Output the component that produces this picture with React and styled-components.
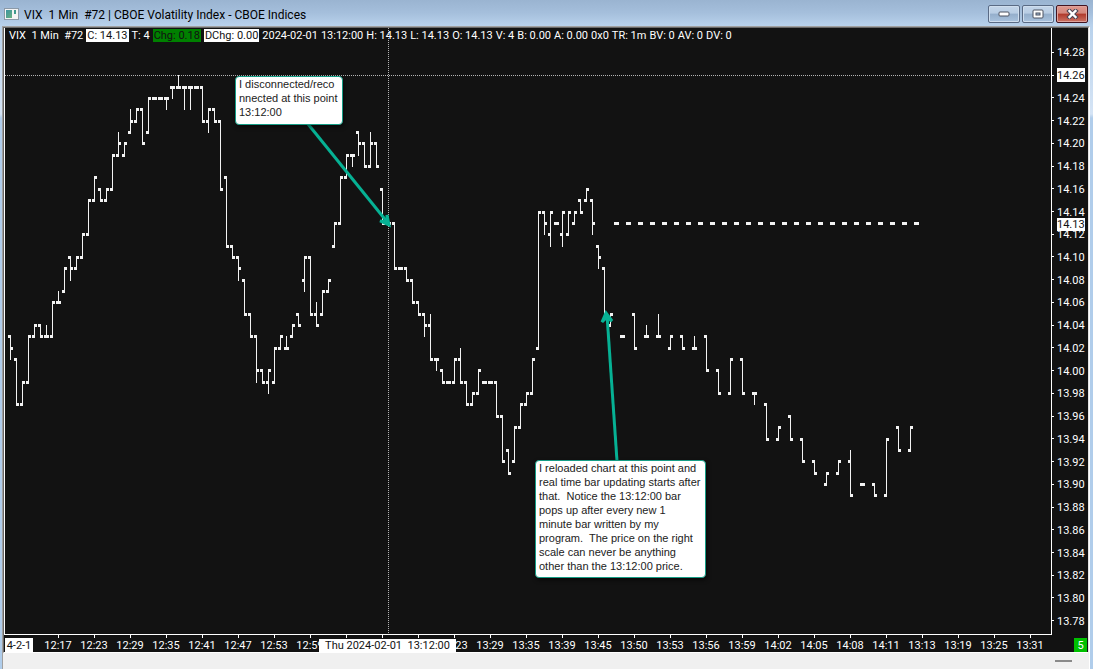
import React from 'react';
import styled, { createGlobalStyle } from 'styled-components';

// one entry per bar: [open, high, low, close] in cents, or a single number for a flat bar
const history = [
  [1403,1403,1401,1402],[1401,1401,1397,1397],[1397,1399,1397,1399],[1399,1403,1399,1403],
  [1403,1404,1403,1404],[1404,1404,1403,1403],[1403,1404,1403,1403],[1403,1406,1403,1406],
  [1406,1407,1406,1406],[1407,1409,1407,1409],[1410,1410,1408,1409],[1409,1410,1409,1410],
  [1410,1412,1410,1412],[1412,1415,1412,1415],[1415,1417,1415,1417],[1416,1416,1415,1415],
  [1415,1416,1415,1416],[1416,1419,1416,1419],[1419,1421,1419,1420],[1419,1420,1419,1420],
  [1421,1423,1421,1422],[1422,1423,1422,1423],[1423,1423,1420,1420],[1421,1424,1421,1424],
  1424,1424,[1424,1424,1423,1424],[1425,1425,1424,1425],
  [1425,1426,1425,1425],[1425,1425,1423,1425],[1425,1425,1423,1425],1425,
  [1425,1425,1422,1422],[1422,1423,1421,1423],[1423,1423,1422,1422],[1422,1422,1416,1416],
  [1417,1417,1411,1411],[1411,1411,1410,1410],[1410,1410,1408,1409],[1408,1408,1405,1405],
  [1405,1405,1403,1403],[1403,1403,1399,1400],[1400,1400,1399,1399],[1399,1400,1398,1400],
  [1399,1402,1399,1402],[1402,1403,1402,1403],[1402,1403,1402,1402],[1403,1404,1403,1404],
  [1405,1405,1404,1404],[1408,1410,1407,1410],[1410,1410,1405,1405],[1405,1406,1404,1404],
  [1405,1407,1405,1407],[1407,1408,1407,1408],[1411,1413,1411,1413],[1413,1417,1413,1417],
  [1417,1419,1417,1419],[1419,1419,1418,1419],[1421,1421,1419,1420],[1420,1420,1418,1418],
  [1418,1421,1418,1420],[1420,1420,1418,1418],[1416,1416,1413,1413],1413,
  [1413,1413,1409,1409],1409,[1409,1409,1408,1408],[1408,1408,1406,1406],
  [1406,1406,1405,1405],[1405,1405,1403,1404],[1404,1405,1401,1401],[1401,1401,1400,1401],
  [1400,1400,1399,1399],1399,[1399,1401,1399,1401],[1401,1402,1399,1399],
  [1399,1399,1397,1397],[1397,1398,1397,1398],[1398,1400,1398,1400],1399,
  1399,[1399,1399,1396,1396],[1396,1396,1392,1392],[1393,1393,1391,1391],
  [1392,1395,1392,1395],[1395,1397,1395,1397],[1397,1398,1397,1398],[1398,1401,1398,1401],
  [1402,1414,1402,1414],[1414,1414,1412,1413],[1412,1414,1411,1414],1413,
  [1412,1414,1411,1414],[1412,1414,1412,1414],[1413,1414,1413,1414],[1415,1415,1414,1414],
  [1415,1416,1415,1416],[1415,1415,1412,1413],[1411,1411,1409,1410],[1409,1409,1405,1405],
  [1404,1405,1404,1405],
];

// real time bars, the 13:12:00 bar is written again in front of each
const live = [
  1403,[1405,1405,1402,1402],[1403,1404,1403,1403],[1403,1405,1403,1403],
  [1402,1403,1402,1403],[1403,1403,1402,1402],[1402,1403,1402,1402],[1403,1403,1400,1400],
  [1400,1400,1398,1398],[1398,1401,1398,1401],[1401,1401,1398,1398],[1398,1398,1397,1398],
  [1397,1397,1394,1394],[1394,1395,1394,1395],[1396,1396,1394,1394],[1394,1394,1392,1392],
  [1392,1392,1391,1391],[1390,1391,1390,1391],[1391,1392,1391,1392],[1392,1393,1389,1389],
  1390,[1390,1390,1389,1389],[1389,1394,1389,1394],[1395,1395,1393,1393],
  [1393,1395,1393,1395],
];

const bars = [...history, ...live.flatMap((b) => [1413, b]), 1413].map((b) =>
  Array.isArray(b) ? b : [b, b, b, b]
);

// the three blank ones sit behind the cursor time
const times = [
  '12:17','12:23','12:29','12:35','12:41','12:47','12:53','12:59','','',
  '','13:23','13:29','13:35','13:39','13:45','13:50','13:53','13:56','13:59',
  '14:02','14:05','14:08','14:11','13:13','13:19','13:25','13:31',
];

const quote = [
  '2024-02-01','13:12:00','H: 14.13','L: 14.13','O: 14.13','V: 4','B: 0.00','A: 0.00',
  '0x0','TR: 1m','BV: 0','AV: 0','DV: 0',
];

const prices = Array.from({ length: 26 }, (_, i) => ((1428 - i * 2) / 100).toFixed(2));

const priceY = (p) => Math.round(24.6 + (1428 - p) * 11.35);

const Bar = ({ x, bar }) => {
  const [open, high, low, close] = bar;
  return (
    <g>
      <rect x={x} y={priceY(high)} width="1" height={priceY(low) - priceY(high) + 1} />
      <rect x={x - 2} y={priceY(open) - 1} width="3" height="3" />
      <rect x={x} y={priceY(close) - 1} width="3" height="3" />
    </g>
  );
};

const App = () => {
  return (
    <Window>
      <GlobalStyle />
      <TitleBar>
        <AppIcon />
        <Title>{'VIX  1 Min  #72 | CBOE Volatility Index - CBOE Indices'}</Title>
        <WindowButton aria-label="Minimize">
          <svg width="13" height="7">
            <rect x="1" y="1" width="10" height="4" rx="1" fill="#fff" stroke="#4c5261" />
          </svg>
        </WindowButton>
        <WindowButton aria-label="Maximize">
          <svg width="12" height="10">
            <rect x="1" y="1" width="10" height="8" rx="1" fill="#fff" stroke="#4c5261" />
            <rect x="4" y="4" width="4" height="2" fill="#9fb8d3" stroke="#4c5261" />
          </svg>
        </WindowButton>
        <WindowButton aria-label="Close" $close>
          <svg width="13" height="10">
            <path d="M3.5 2l6 6M9.5 2l-6 6" stroke="#4a4655" strokeWidth="4.4" strokeLinecap="square" />
            <path d="M3.5 2l6 6M9.5 2l-6 6" stroke="#fff" strokeWidth="2.4" strokeLinecap="square" />
          </svg>
        </WindowButton>
      </TitleBar>

      <Frame>
        <Chart>
          <Plot>
            <Canvas aria-label="VIX one minute bars">
              <g shapeRendering="crispEdges">
                <path d="M0 47.5H1047" stroke="#b4b4b4" strokeDasharray="1 1" />
                <path d="M383.5 0V606" stroke="#b4b4b4" strokeDasharray="1 1" />
                <g fill="#f2f2f2">
                  {bars.map((bar, i) => (
                    <Bar key={i} x={5 + i * 6} bar={bar} />
                  ))}
                </g>
              </g>
              <g fill="none" stroke="#06b194" strokeWidth="3">
                <path d="M303 96L383 195" />
                <path d="M375 193L384 197L382 187L382 194Z" />
                <path d="M612 433L602 287" />
                <path d="M597 294L601 285L607 293L601 290Z" />
              </g>
            </Canvas>
            <Info>
              <span>{'VIX  1 Min  #72'}</span>
              <Mark $bg="#fff">C: 14.13</Mark>
              <span>T: 4</span>
              <Mark $bg="#008000">Chg: 0.18</Mark>
              <Mark $bg="#fff">DChg: 0.00</Mark>
              {quote.map((q) => (
                <span key={q}>{q}</span>
              ))}
            </Info>
            <Note $x={230} $y={48} $width={108} $height={49}>
              I disconnected/reco<br />nnected at this point<br />13:12:00
            </Note>
            <Note $x={530} $y={432} $width={171} $height={118}>
              I reloaded chart at this point and<br />
              real time bar updating starts after<br />
              {'that.  Notice the 13:12:00 bar'}<br />
              pops up after every new 1<br />
              minute bar written by my<br />
              {'program.  The price on the right'}<br />
              scale can never be anything<br />
              other than the 13:12:00 price.
            </Note>
          </Plot>

          <PriceAxis>
            {prices.map((p) => (
              <Price key={p} $marked={p === '14.26'}>
                <span>{p}</span>
              </Price>
            ))}
            <LastPrice>14.13</LastPrice>
          </PriceAxis>

          <TimeAxis>
            <DateTag>4-2-1</DateTag>
            {times.map((t, i) => (
              <Time key={i}>{t}</Time>
            ))}
            <CursorTime>{'Thu 2024-02-01  13:12:00'}</CursorTime>
            <Count>5</Count>
          </TimeAxis>
        </Chart>
        <ScrollBar>
          <Thumb />
        </ScrollBar>
      </Frame>
    </Window>
  );
};

export default App;

const GlobalStyle = createGlobalStyle`
  body {
    margin: 0;
    overflow: hidden;
    font-family: Roboto, 'Noto Sans', sans-serif;
    font-size: 11px;
  }
`;

const Window = styled.div`
  display: flex;
  flex-direction: column;
  height: 100vh;
  background: linear-gradient(#9ab4d1, #b9d2ec 27px, #d5e4f5 114px, #b0cdeb 118px);
`;

const TitleBar = styled.header`
  display: flex;
  align-items: center;
  gap: 2px;
  height: 26px;
  padding: 0 5px 0 4px;
  box-sizing: border-box;
  background: linear-gradient(#9ab4d1, #a5bfdc 50%, #b9d2ec);
`;

const AppIcon = styled.i`
  width: 15px;
  height: 12px;
  margin-top: 2px;
  box-sizing: border-box;
  border: 1px solid #8c9aa8;
  background:
    linear-gradient(#3f9a8d, #3f9a8d) 9px 1px / 2px 4px no-repeat,
    linear-gradient(135deg, #3d94a0, #68b081) 1px 1px / 6px 8px no-repeat,
    #f4f4f4;
`;

const Title = styled.h1`
  flex: 1;
  margin: 0;
  padding-left: 3px;
  padding-top: 4px;
  font-size: 12px;
  font-weight: 400;
  line-height: 18px;
  white-space: pre;
  color: #000;
`;

const WindowButton = styled.button`
  display: flex;
  align-items: center;
  justify-content: center;
  width: 32px;
  height: 18px;
  margin-top: 2px;
  padding: 0;
  border: 1px solid ${(p) => (p.$close ? '#431420' : '#5a6b85')};
  border-radius: 2px;
  box-shadow: inset 0 0 0 1px ${(p) => (p.$close ? '#dfa29b' : '#cfdeee')};
  background: ${(p) =>
    p.$close
      ? 'linear-gradient(#e0998f, #d3877c 45%, #b0392b 50%, #cb7364)'
      : 'linear-gradient(#c3d5e9, #b8cde4 45%, #94aecb 50%, #a9c2de)'};
`;

const Frame = styled.main`
  flex: 1;
  display: flex;
  flex-direction: column;
  margin: 0 3px 0 2px;
  border-top: 1px solid #a0a0a0;
  border-left: 1px solid #a0a0a0;
  border-right: 1px solid #fff;
  background: #f0f0f0;
`;

const Chart = styled.section`
  flex: 1;
  display: grid;
  grid-template-columns: minmax(0, 1fr) 36px;
  grid-template-rows: minmax(0, 1fr) 17px;
  border-top: 1px solid #696969;
  border-left: 1px solid #696969;
  border-right: 1px solid #e3e3e3;
  border-bottom: 1px solid #fff;
  background: #121212;
  color: #fff;
`;

const Plot = styled.div`
  position: relative;
  overflow: hidden;
  border: 1px solid #fff;
  border-top: none;
`;

const Canvas = styled.svg`
  position: absolute;
  top: 0;
  left: 0;
  width: 100%;
  height: 100%;
`;

const Info = styled.div`
  position: relative;
  display: flex;
  gap: 3px;
  padding: 1px 0 0 4px;
  line-height: 13px;
  white-space: pre;
`;

const Mark = styled.span`
  padding: 0 1px;
  color: #121212;
  background: ${(p) => p.$bg};
`;

const Note = styled.p`
  position: absolute;
  left: ${(p) => p.$x}px;
  top: ${(p) => p.$y}px;
  width: ${(p) => p.$width}px;
  height: ${(p) => p.$height}px;
  box-sizing: border-box;
  margin: 0;
  padding: 0 3px;
  border: 1px solid #159c85;
  border-radius: 4px;
  background: #fff;
  color: #222;
  font-family: 'Liberation Sans', Arial, sans-serif;
  font-size: 11px;
  line-height: 14px;
  white-space: pre;
  box-shadow: 1px 2px 4px rgba(0, 0, 0, 0.6);
`;

const PriceAxis = styled.div`
  position: relative;
  display: flex;
  flex-direction: column;
  padding: 13px 0 3px;
`;

const Price = styled.div`
  flex: 1;
  display: flex;
  align-items: center;
  gap: 3px;
  line-height: 13px;

  &::before {
    content: '';
    width: 2px;
    height: 1px;
    background: #fff;
  }

  span {
    padding-top: 1px;
    color: ${(p) => (p.$marked ? '#121212' : '#fff')};
    background: ${(p) => (p.$marked ? '#fff' : 'none')};
  }
`;

const LastPrice = styled.span`
  position: absolute;
  left: 5px;
  top: 190px;
  line-height: 13px;
  color: #121212;
  background: #fff;
`;

const TimeAxis = styled.div`
  grid-column: 1 / 3;
  position: relative;
  display: flex;
  align-items: flex-start;
  line-height: 13px;
`;

const DateTag = styled.div`
  width: 28px;
  margin: 3px 7px 0 1px;
  padding-top: 1px;
  text-align: center;
  color: #121212;
  background: #fff;
  white-space: nowrap;
`;

const Time = styled.span`
  flex: none;
  width: 36px;
  text-align: center;

  &::before {
    content: '';
    display: block;
    width: 1px;
    height: 3px;
    margin: 0 auto 1px;
    background: #fff;
  }
`;

const CursorTime = styled.span`
  position: absolute;
  left: 315px;
  top: 4px;
  width: 137px;
  text-align: center;
  white-space: pre;
  line-height: 13px;
  color: #121212;
  background: #fff;
`;

const Count = styled.span`
  width: 13px;
  margin: 3px 1px 0 auto;
  padding-top: 1px;
  text-align: center;
  background: #00c000;
`;

const ScrollBar = styled.footer`
  display: flex;
  justify-content: flex-end;
  height: 16px;
`;

const Thumb = styled.i`
  width: 17px;
  height: 2px;
  margin: 7px 17px 0 0;
  background: #8a8a8a;
`;
